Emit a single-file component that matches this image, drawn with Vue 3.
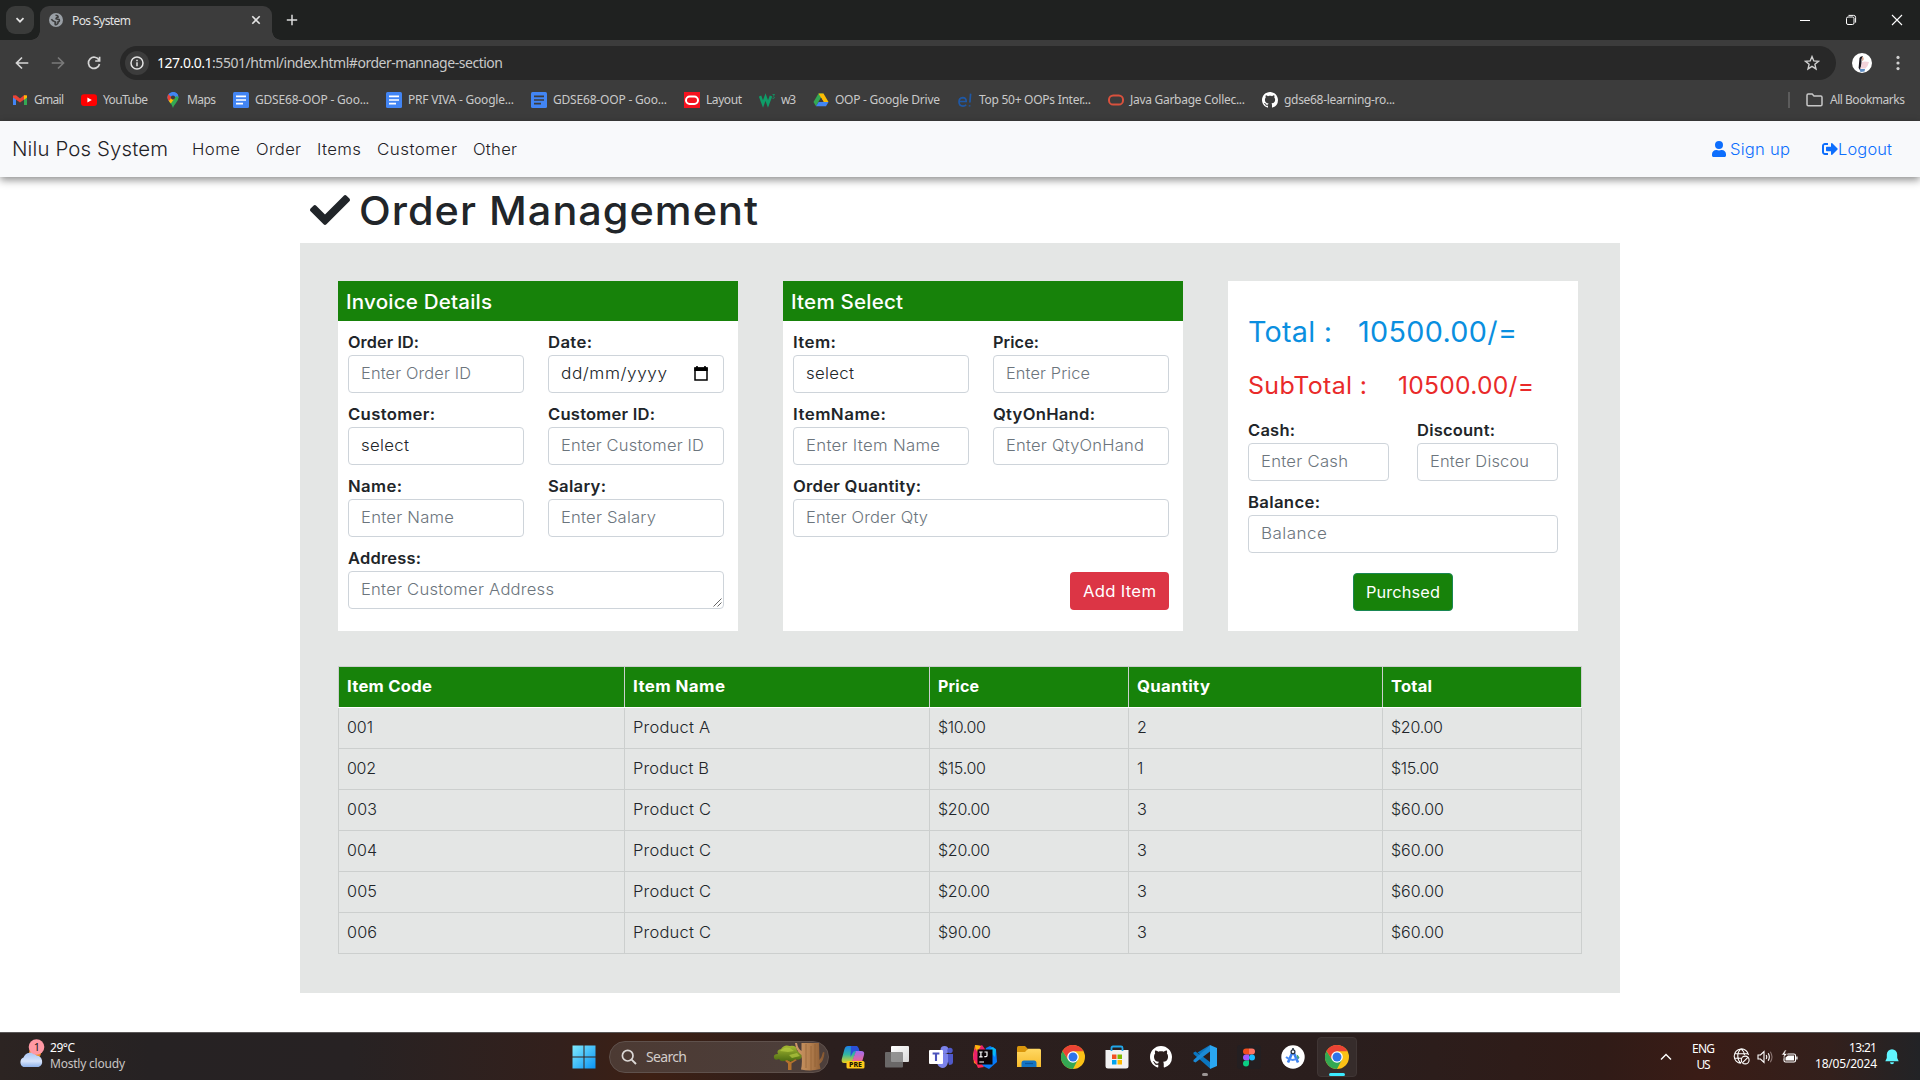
<script setup>
// v-fit: widens and tracks a line of text so that it takes exactly the given width
const vFit = {
  mounted(el, { value }) {
    const n = [...el.textContent].length
    const natural = el.getBoundingClientRect().width
    const scale = value > natural * 1.02 ? Math.pow(value / natural, 0.6) : 1
    const width = value / scale
    if (n > 1) el.style.letterSpacing = `${(width - natural) / (n - 1)}px`
    el.style.width = `${width}px`
    if (scale > 1) {
      el.style.transform = `scaleX(${scale})`
      el.style.marginRight = `${value - width}px`
    }
  },
}

const bookmarks = [
  { icon: 'gmail', text: 'Gmail', w: 30 },
  { icon: 'youtube', text: 'YouTube', w: 45 },
  { icon: 'maps', text: 'Maps', w: 29 },
  { icon: 'docs', text: 'GDSE68-OOP - Goo...', w: 114 },
  { icon: 'docs', text: 'PRF VIVA - Google...', w: 106 },
  { icon: 'docs2', text: 'GDSE68-OOP - Goo...', w: 114 },
  { icon: 'layout', text: 'Layout', w: 36 },
  { icon: 'w3', text: 'w3', w: 15 },
  { icon: 'drive', text: 'OOP - Google Drive', w: 105 },
  { icon: 'edu', text: 'Top 50+ OOPs Inter...', w: 112 },
  { icon: 'oracle', text: 'Java Garbage Collec...', w: 115 },
  { icon: 'github', text: 'gdse68-learning-ro...', w: 111 },
]

const links = [
  { text: 'Home', w: 48 },
  { text: 'Order', w: 45 },
  { text: 'Items', w: 44 },
  { text: 'Customer', w: 80 },
  { text: 'Other', w: 44 },
]

const invoice = [
  { label: 'Order ID:', lw: 71, text: 'Enter Order ID', w: 110 },
  { label: 'Date:', lw: 44, text: 'dd/mm/yyyy', w: 106, dark: true, date: true },
  { label: 'Customer:', lw: 87, text: 'select', w: 48, dark: true },
  { label: 'Customer ID:', lw: 107, text: 'Enter Customer ID', w: 143 },
  { label: 'Name:', lw: 54, text: 'Enter Name', w: 93 },
  { label: 'Salary:', lw: 58, text: 'Enter Salary', w: 95 },
  { label: 'Address:', lw: 73, text: 'Enter Customer Address', w: 193, wide: true, grip: true },
]

const items = [
  { label: 'Item:', lw: 43, text: 'select', w: 48, dark: true },
  { label: 'Price:', lw: 46, text: 'Enter Price', w: 84 },
  { label: 'ItemName:', lw: 93, text: 'Enter Item Name', w: 134 },
  { label: 'QtyOnHand:', lw: 102, text: 'Enter QtyOnHand', w: 138 },
  { label: 'Order Quantity:', lw: 128, text: 'Enter Order Qty', w: 122, wide: true },
]

const payment = [
  { label: 'Cash:', lw: 47, text: 'Enter Cash', w: 87 },
  { label: 'Discount:', lw: 78, text: 'Enter Discount', w: 114 },
  { label: 'Balance:', lw: 72, text: 'Balance', w: 66, wide: true },
]

const heads = [
  { text: 'Item Code', w: 85 },
  { text: 'Item Name', w: 92 },
  { text: 'Price', w: 41 },
  { text: 'Quantity', w: 73 },
  { text: 'Total', w: 41 },
]

const rows = [
  [['001', 26], ['Product A', 77], ['$10.00', 48], ['2', 9], ['$20.00', 52]],
  [['002', 29], ['Product B', 76], ['$15.00', 48], ['1', 6], ['$15.00', 48]],
  [['003', 30], ['Product C', 78], ['$20.00', 52], ['3', 10], ['$60.00', 53]],
  [['004', 30], ['Product C', 78], ['$20.00', 52], ['3', 10], ['$60.00', 53]],
  [['005', 30], ['Product C', 78], ['$20.00', 52], ['3', 10], ['$60.00', 53]],
  [['006', 30], ['Product C', 78], ['$90.00', 53], ['3', 10], ['$60.00', 53]],
]
</script>

<template>
  <div class="screen">
    <svg width="0" height="0" class="defs">
      <defs>
        <linearGradient id="winG" x1="0" y1="0" x2="1" y2="1"><stop offset="0" stop-color="#7feafd" /><stop offset="1" stop-color="#0a93f5" /></linearGradient>
        <linearGradient id="cloudG" x1="0" y1="0" x2="0" y2="1"><stop offset="0" stop-color="#a9c6f5" /><stop offset=".6" stop-color="#d6e4fb" /><stop offset="1" stop-color="#8fb2ea" /></linearGradient>
        <linearGradient id="trunkG" x1="0" y1="0" x2="1" y2="0"><stop offset="0" stop-color="#cf9a68" /><stop offset=".5" stop-color="#b5804f" /><stop offset="1" stop-color="#85562f" /></linearGradient>
        <linearGradient id="leafG" x1="0" y1="0" x2="0" y2="1"><stop offset="0" stop-color="#a5b932" /><stop offset="1" stop-color="#4c6b12" /></linearGradient>
        <linearGradient id="copA" x1="0" y1="0" x2="0" y2="1"><stop offset="0" stop-color="#1c7fe8" /><stop offset=".5" stop-color="#34b7a0" /><stop offset="1" stop-color="#e8d21c" /></linearGradient>
        <linearGradient id="copB" x1="0" y1="0" x2="0" y2="1"><stop offset="0" stop-color="#a06cf0" /><stop offset="1" stop-color="#f2668c" /></linearGradient>
        <linearGradient id="foldG" x1="0" y1="0" x2="0" y2="1"><stop offset="0" stop-color="#ffd863" /><stop offset="1" stop-color="#f7bb2b" /></linearGradient>
        <linearGradient id="tvG" x1="0" y1="0" x2="1" y2="1"><stop offset="0" stop-color="#fff" /><stop offset="1" stop-color="#d8d8d8" /></linearGradient>
        <symbol id="gh" viewBox="0 0 16 16"><path d="M8 0C3.58 0 0 3.58 0 8c0 3.54 2.29 6.53 5.47 7.59.4.07.55-.17.55-.38 0-.19-.01-.82-.01-1.49-2.01.37-2.53-.49-2.69-.94-.09-.23-.48-.94-.82-1.13-.28-.15-.68-.52-.01-.53.63-.01 1.08.58 1.23.82.72 1.21 1.87.87 2.33.66.07-.52.28-.87.51-1.07-1.78-.2-3.64-.89-3.64-3.95 0-.87.31-1.59.82-2.15-.08-.2-.36-1.02.08-2.12 0 0 .67-.21 2.2.82.64-.18 1.32-.27 2-.27s1.36.09 2 .27c1.53-1.04 2.2-.82 2.2-.82.44 1.1.16 1.92.08 2.12.51.56.82 1.27.82 2.15 0 3.07-1.87 3.75-3.65 3.95.29.25.54.73.54 1.48 0 1.07-.01 1.93-.01 2.2 0 .21.15.46.55.38A8.01 8.01 0 0 0 16 8c0-4.42-3.58-8-8-8z" fill="#fff" /></symbol>
        <symbol id="chrome" viewBox="0 0 48 48">
          <circle cx="24" cy="24" r="24" fill="#fbc116" />
          <path d="M14.400 29.500 3.200 12A24 24 0 0 0 24 48L33.600 29.500Z" fill="#34a853" />
          <path d="M3.200 12A24 24 0 0 1 44.800 12.500H24L14.400 29.500Z" fill="#ea4335" />
          <circle cx="24" cy="24" r="11.600" fill="#fff" /><circle cx="24" cy="24" r="9" fill="#2f74ea" />
        </symbol>
      </defs>
    </svg>

    <!-- tab strip -->
    <div class="tabs">
      <div class="tabsearch"><svg width="10" height="10" viewBox="0 0 10 10"><path d="M1.5 3.2 5 6.7 8.5 3.2" fill="none" stroke="#e3e3e3" stroke-width="1.7" /></svg></div>
      <div class="tab">
        <svg width="14" height="14" viewBox="0 0 14 14"><circle cx="7" cy="7" r="7" fill="#9aa0a6" /><path d="M6.5 2.2Q9.5 2.5 9 4.2 7 4.6 7 5.8 9 6.5 10.2 6.6 11 8.6 9 9 9.4 11 7 11.8 5.8 12 6.2 10 7.4 9 5.5 8.6 3.4 8 2.4 6.2" fill="none" stroke="#3c3c3c" stroke-width="1.6" /></svg>
        <span v-fit="59" class="tabtitle">Pos System</span>
        <svg width="10" height="10" viewBox="0 0 10 10"><path d="M1.3 1.3 8.7 8.7M8.7 1.3 1.3 8.7" stroke="#e3e3e3" stroke-width="1.6" /></svg>
      </div>
      <svg class="plus" width="12" height="12" viewBox="0 0 12 12"><path d="M6 .8V11.2M.8 6H11.2" stroke="#dcdcdc" stroke-width="1.5" /></svg>
      <div class="winbtns">
        <svg width="12" height="12" viewBox="0 0 12 12"><path d="M1 6.5H11" stroke="#fff" /></svg>
        <svg width="12" height="12" viewBox="0 0 12 12"><rect x="1.5" y="3" width="7.5" height="7.5" rx="1.5" fill="none" stroke="#fff" /><path d="M3.5 1.4H8.6A2 2 0 0 1 10.6 3.4V8.6" fill="none" stroke="#fff" /></svg>
        <svg width="12" height="12" viewBox="0 0 12 12"><path d="M1 1 11 11M11 1 1 11" stroke="#fff" stroke-width="1.1" /></svg>
      </div>
    </div>

    <!-- address bar -->
    <div class="toolbar">
      <div class="navbtns">
        <svg width="16" height="16" viewBox="0 0 16 16"><path d="M14.3 8H3M8 2.5 2.5 8 8 13.5" fill="none" stroke="#d6d6d6" stroke-width="1.7" /></svg>
        <svg width="16" height="16" viewBox="0 0 16 16"><path d="M1.7 8H13M8 2.5 13.5 8 8 13.5" fill="none" stroke="#797979" stroke-width="1.7" /></svg>
        <svg width="16" height="16" viewBox="0 0 16 16"><path d="M13 5.2A5.6 5.6 0 1 0 13.5 9M13.6 1.8V6H9.2" fill="none" stroke="#d6d6d6" stroke-width="1.7" /></svg>
      </div>
      <div class="omni">
        <div class="info"><svg width="14" height="14" viewBox="0 0 14 14"><circle cx="7" cy="7" r="6" fill="none" stroke="#e3e3e3" stroke-width="1.5" /><path d="M7 6.2V10.3M7 3.7V5.2" stroke="#e3e3e3" stroke-width="1.5" /></svg></div>
        <span v-fit="346" class="url"><b>127.0.0.1</b>:5501/html/index.html#order-mannage-section</span>
        <svg class="star" width="16" height="16" viewBox="0 0 16 16"><path d="M8 1.6 9.8 5.9 14.5 6.3 10.9 9.3 12 13.9 8 11.4 4 13.9 5.1 9.3 1.5 6.3 6.2 5.9Z" fill="none" stroke="#d0d0d0" stroke-width="1.4" /></svg>
      </div>
      <svg class="avatar" width="20" height="20" viewBox="0 0 20 20"><circle cx="10" cy="10" r="10" fill="#fff" /><path d="M7.500 5Q8.500 2.800 11 3.300L9.500 6V11L8 17 6.600 15Z" fill="#1b1720" /><path d="M10 3.800Q12.300 4 11.500 7L10 8.200Z" fill="#d9a58e" /><path d="M10 9 13 8.500 17 9 15.500 13 13.500 15.500H8.500Z" fill="#f3d3da" /><path d="M7.500 16H13L12.500 18.500 8.500 19Z" fill="#5f8ec4" /></svg>
      <svg class="dots" width="4" height="16" viewBox="0 0 4 16"><g fill="#d0d0d0"><circle cx="2" cy="2.4" r="1.6" /><circle cx="2" cy="8" r="1.6" /><circle cx="2" cy="13.6" r="1.6" /></g></svg>
    </div>

    <!-- bookmarks -->
    <div class="marks">
      <div v-for="(b, i) in bookmarks" :key="i" class="mark">
        <svg width="16" height="16" viewBox="0 0 16 16">
          <g v-if="b.icon === 'gmail'"><path d="M1 4V13H4V6Z" fill="#4285f4" /><path d="M12 6V13H15V4Z" fill="#34a853" /><path d="M1 3.5 4 3.2 8 6.4 12 3.2 15 3.5V5.6L8 10.6 1 5.6Z" fill="#ea4335" /><path d="M12 3.2 15 3.5V5.6L12 7.8Z" fill="#fbbc04" /></g>
          <g v-else-if="b.icon === 'youtube'"><rect y="2.3" width="16" height="11.6" rx="3" fill="#f00" /><path d="M6.4 5.6 10.8 8.1 6.4 10.6Z" fill="#fff" /></g>
          <g v-else-if="b.icon === 'maps'"><path d="M8 0A5.6 5.6 0 0 0 2.4 5.6Q2.4 8 5 10.5L13.6 5.6A5.6 5.6 0 0 0 8 0Z" fill="#4285f4" /><path d="M3.7 2.1 8 5.6 4.5 9.8Q2.4 7.7 2.4 5.6 2.4 3.6 3.7 2.1Z" fill="#ea4335" /><path d="M4 9.3 10 2.2 13.6 5.6Q13.6 8 11 11Q8.8 13.5 8 16 7.2 13 5.5 11.2Z" fill="#34a853" /><path d="M3.8 9 8 4 10 6 5.8 11.4Z" fill="#fbbc04" /><path d="M3.7 2.1 8 0Q12 0 13.2 3.5L10 5 5 4Z" fill="#4285f4" /><circle cx="8" cy="5.6" r="2.1" fill="#3c3c3c" /></g>
          <g v-else-if="b.icon === 'docs' || b.icon === 'docs2'"><rect width="16" height="16" rx="1.5" fill="#4285f4" /><path d="M3 4.3H13M3 8H13M3 11.7H10" :stroke="b.icon === 'docs' ? '#fff' : '#3c3c3c'" stroke-width="1.7" /></g>
          <g v-else-if="b.icon === 'layout'"><rect width="16" height="16" fill="#f5121f" /><rect x="2" y="4.5" width="12" height="7.4" rx="3.7" fill="none" stroke="#fff" stroke-width="2" /></g>
          <g v-else-if="b.icon === 'w3'"><path d="M1 4 4 12 6.5 5 9 12 12 4" fill="none" stroke="#0f9d68" stroke-width="2.6" /><path d="M13.5 2.5H15.6L14.4 4.2Q16.2 5 14.8 6.4L13.4 6.2" fill="none" stroke="#0f9d68" stroke-width=".8" /></g>
          <g v-else-if="b.icon === 'drive'"><path d="M5.5 1.5H10.5L5.5 10 3 14.2.5 10Z" fill="#34a853" /><path d="M5.5 1.5H10.5L15.5 10H10.6Z" fill="#fbbc04" /><path d="M5.6 10H15.5L13 14.2H3Z" fill="#4285f4" /><path d="M8 5.8 10.5 10H5.5Z" fill="#3c3c3c" /></g>
          <g v-else-if="b.icon === 'edu'"><path d="M2.6 9.5H9.2Q9.2 5.6 5.8 5.6 2 5.8 2 10 2.2 14 6 14.2 8 14.2 9.2 12.8M13.6 1.6 12.9 10.5M12.6 13.2V14.6" fill="none" stroke="#1f58a5" stroke-width="1.7" /></g>
          <g v-else-if="b.icon === 'oracle'"><rect x="1" y="3.4" width="14" height="9.2" rx="4.2" fill="none" stroke="#d8513d" stroke-width="2" /></g>
          <use v-else href="#gh" />
        </svg>
        <span v-fit="b.w">{{ b.text }}</span>
      </div>
      <div class="allmarks">
        <i class="sep"></i>
        <svg width="17" height="14" viewBox="0 0 17 14"><path d="M1 2.2Q1 1 2.2 1H6.2L8 3H14.8Q16 3 16 4.2V11.6Q16 12.8 14.8 12.8H2.2Q1 12.8 1 11.6Z" fill="none" stroke="#c7c7c7" stroke-width="1.5" /></svg>
        <span v-fit="75">All Bookmarks</span>
      </div>
    </div>

    <!-- site navbar -->
    <nav class="sitenav">
      <span v-fit="156" class="brand">Nilu Pos System</span>
      <div class="links"><span v-for="l in links" :key="l.text" v-fit="l.w">{{ l.text }}</span></div>
      <div class="auth">
        <svg width="14" height="16" viewBox="0 0 448 512"><path d="M224 256a128 128 0 1 0 0-256 128 128 0 1 0 0 256zm90 32h-17c-22 10-47 16-73 16s-51-6-73-16h-17C60 288 0 348 0 422v42c0 26 22 48 48 48h352c26 0 48-22 48-48v-42c0-74-60-134-134-134z" fill="#0d6efd" /></svg>
        <span v-fit="60" class="signup">Sign up</span>
        <svg class="exit" width="16" height="16" viewBox="0 0 512 512"><path d="M497 273 329 441c-15 15-41 4.500-41-17v-96H152c-13 0-24-11-24-24v-96c0-13 11-24 24-24h136V88c0-21 26-32 41-17l168 168c9 9 9 25 0 34zM192 436v-40c0-7-5-12-12-12H96c-18 0-32-14-32-32V160c0-18 14-32 32-32h84c7 0 12-5 12-12V76c0-7-5-12-12-12H96c-53 0-96 43-96 96v192c0 53 43 96 96 96h84c7 0 12-5 12-12z" fill="#0d6efd" /></svg>
        <span v-fit="54">Logout</span>
      </div>
    </nav>

    <main class="page">
      <h1 class="title">
        <svg width="40" height="40" viewBox="0 0 512 512"><path d="M173.900 439.400 7.500 273c-10-10-10-26.200 0-36.200l36.200-36.200c10-10 26.200-10 36.200 0L192 312.700 432.100 72.600c10-10 26.200-10 36.200 0l36.200 36.200c10 10 10 26.200 0 36.200L210.100 439.400c-10 10-26.200 10-36.200 0z" fill="#212529" /></svg>
        <span v-fit="399">Order Management</span>
      </h1>

      <section class="panel">
        <div class="cards">
          <div class="card">
            <h5 class="head"><span v-fit="146">Invoice Details</span></h5>
            <div class="grid">
              <div v-for="f in invoice" :key="f.label" class="field" :class="{ wide: f.wide }">
                <label><span v-fit="f.lw">{{ f.label }}</span></label>
                <div class="input" :class="{ dark: f.dark }">
                  <span v-fit="f.w">{{ f.text }}</span>
                  <svg v-if="f.date" class="cal" width="14" height="15" viewBox="0 0 14 15"><path d="M3 0V3M11 0V3" stroke="#000" stroke-width="1.6" /><path d="M1 2H13V14H1Z" fill="none" stroke="#000" stroke-width="1.5" /><path d="M.3 1.500H13.700V5H.3Z" /></svg>
                  <svg v-if="f.grip" class="grip" width="9" height="9" viewBox="0 0 9 9"><path d="M.5 8.500 8.500.5M4.500 8.500 8.500 4.500" stroke="#555" stroke-width=".9" /></svg>
                </div>
              </div>
            </div>
          </div>

          <div class="card">
            <h5 class="head"><span v-fit="112">Item Select</span></h5>
            <div class="grid">
              <div v-for="f in items" :key="f.label" class="field" :class="{ wide: f.wide }">
                <label><span v-fit="f.lw">{{ f.label }}</span></label>
                <div class="input" :class="{ dark: f.dark }"><span v-fit="f.w">{{ f.text }}</span></div>
              </div>
            </div>
            <div class="action"><button class="btn red"><span v-fit="73">Add Item</span></button></div>
          </div>

          <div class="card pay">
            <div class="sum total"><span v-fit="84">Total :</span><span v-fit="159">10500.00/=</span></div>
            <div class="sum sub"><span v-fit="119">SubTotal :</span><span v-fit="136">10500.00/=</span></div>
            <div class="grid paygrid">
              <div v-for="f in payment" :key="f.label" class="field" :class="{ wide: f.wide }">
                <label><span v-fit="f.lw">{{ f.label }}</span></label>
                <div class="input"><div class="clip"><span v-fit="f.w">{{ f.text }}</span></div></div>
              </div>
            </div>
            <button class="btn green"><span v-fit="74">Purchsed</span></button>
          </div>
        </div>

        <table class="table">
          <colgroup><col class="c1" /><col class="c2" /><col class="c3" /><col class="c4" /><col class="c5" /></colgroup>
          <thead><tr><th v-for="h in heads" :key="h.text"><span v-fit="h.w">{{ h.text }}</span></th></tr></thead>
          <tbody>
            <tr v-for="(r, i) in rows" :key="i"><td v-for="(c, j) in r" :key="j"><span v-fit="c[1]">{{ c[0] }}</span></td></tr>
          </tbody>
        </table>
      </section>
    </main>

    <!-- taskbar -->
    <footer class="taskbar">
      <div class="weather">
        <svg width="28" height="32" viewBox="0 0 28 32"><circle cx="17" cy="15" r="6" fill="#f08a1d" /><path d="M5.500 29A5.200 5.200 0 0 1 5.500 19.500 7.500 7.500 0 0 1 18.500 17.500 6 6 0 0 1 20.500 29Z" fill="url(#cloudG)" /><circle cx="18.500" cy="9" r="7.800" fill="#ff99a4" /><text x="19" y="13" text-anchor="middle" font-size="11" fill="#1c1c1c">1</text></svg>
        <div class="wtext"><span v-fit="25">29°C</span><span v-fit="75" class="dim">Mostly cloudy</span></div>
      </div>

      <div class="apps">
        <svg width="24" height="24" viewBox="0 0 24 24"><path d="M.5.5H11.500V11.500H.5ZM12.500.5H23.500V11.500H12.500ZM.5 12.500H11.500V23.500H.5ZM12.500 12.500H23.500V23.500H12.500Z" fill="url(#winG)" /></svg>
        <div class="search">
          <svg width="16" height="16" viewBox="0 0 16 16"><circle cx="6.700" cy="6.700" r="5.300" fill="none" stroke="#dcd8d6" stroke-width="1.700" /><path d="M10.600 10.600 15 15" stroke="#dcd8d6" stroke-width="1.900" /></svg>
          <span v-fit="41">Search</span>
          <svg class="tree" width="52" height="28" viewBox="0 0 52 28">
            <path d="M11 17 15 20.500V27H18.500V20.500L24 17 22 16 17.500 19 13 16Z" fill="#b4722e" />
            <path d="M1 15Q0 11 5 11 3 7 8 6 11 1 17 3 24 2 24 8 29 9 29 14 27 18 22 16 19 20 14 17 8 20 6 16 2 18 1 15Z" fill="url(#leafG)" />
            <path d="M7 8Q11 3 17 5L21 8 15 9ZM16 12 24 10 27 13 19 15Z" fill="#b5c941" opacity=".7" />
            <path d="M22 0H24Q25 6 28.500 8V0H46L46.500 17Q49 14 50 9L51.500 9.500Q51 18 46.500 21L47.500 26Q38 28.500 28 26.500 29.500 20 28.500 12 23 8 22 0Z" fill="url(#trunkG)" />
            <path d="M33 1V25M38 3V27M42 1V24" stroke="#8a5a31" stroke-width=".6" />
          </svg>
        </div>
        <div class="icons">
          <svg width="24" height="24" viewBox="0 0 24 24"><path d="M7 1H15Q17 1 16 4L12 15Q11 18 8 18H3Q0 18 .8 14L3.500 4Q4.300 1 7 1Z" fill="url(#copA)" /><path d="M15 6H20Q24 6 23 10L21 17H8Q11 17 12 14Z" fill="url(#copB)" /><path d="M10 1H15Q17.500 1 18.500 6H14Q12 6 11 9L9.500 12Z" fill="#2a50d8" /><rect x="5.500" y="16" width="18" height="7.500" rx="1.500" fill="#ffca1a" /><text x="14.500" y="22.300" text-anchor="middle" font-size="7" font-weight="800" fill="#1c1400">PRE</text></svg>
          <svg width="24" height="24" viewBox="0 0 24 24"><rect x="6" y="1" width="18" height="16" rx="1" fill="url(#tvG)" /><rect y="7" width="18" height="15.500" rx="1" fill="#7a7a7a" opacity=".8" /></svg>
          <svg width="24" height="24" viewBox="0 0 24 24"><circle cx="15.500" cy="5" r="4" fill="#7b83eb" /><circle cx="21" cy="5.500" r="2.700" fill="#5059c9" /><path d="M17 9H24V17Q24 20 20 20Z" fill="#5059c9" /><path d="M9 9H19V17Q18 23 13 23 9 22 8 18Z" fill="#7b83eb" /><rect y="5" width="14" height="14" rx="1" fill="#fff" /><path d="M3.600 8.500H10.400M7 8.500V16" stroke="#4b53bc" stroke-width="2.100" /></svg>
          <svg width="24" height="24" viewBox="0 0 24 24"><path d="M2 0 9 1 12 6 6 21 1 18 0 10Z" fill="#fc801d" /><path d="M9 0 14 7 5 20 0 14 1 5Z" fill="#e9216b" /><path d="M2 0 8 1 4 7Z" fill="#fdb60d" /><path d="M13 3 17 1 23 4 24 17 16 24 8 20Z" fill="#087cfa" /><path d="M15 5 20 2 23 5 22 12Z" fill="#07b9f5" /><path d="M1 14 8 18 11 22 5 23Z" fill="#fe2857" /><rect x="4.500" y="4.500" width="15" height="15" fill="#0b0508" /><path d="M6.200 7H9.600M7.900 7V11.800M6.200 11.800H9.600M11.500 7H14V10.500Q14 12 11.300 11.600M6.300 17H11" fill="none" stroke="#fff" stroke-width="1.200" /></svg>
          <svg width="24" height="24" viewBox="0 0 24 24"><path d="M0 2.500Q0 1 1.500 1H8L10.500 3.500V9H0Z" fill="#d9960c" /><path d="M0 7H8L11 3.800H22.500Q24 3.800 24 5.300V22H0Z" fill="url(#foldG)" /><path d="M4.500 22V18Q4.500 15.500 7 15.500H17Q19.500 15.500 19.500 18V22Z" fill="#1374c4" /><path d="M8 18.500H16" stroke="#0b559c" stroke-width="1.200" /></svg>
          <svg width="24" height="24"><use href="#chrome" /></svg>
          <svg width="24" height="24" viewBox="0 0 24 24"><path d="M.5 5H23.500V21Q23.500 23.500 21 23.500H3Q.5 23.500.5 21Z" fill="#f2f2f2" /><path d="M7 9.500H11.500V14H7Z" fill="#f25022" /><path d="M12.500 9.500H17V14H12.500Z" fill="#7fba00" /><path d="M7 15H11.500V19.500H7Z" fill="#00a4ef" /><path d="M12.500 15H17V19.500H12.500Z" fill="#ffb900" /><path d="M6.500 6V3Q6.500 1.500 8 1.500H16Q17.500 1.500 17.500 3V6" fill="none" stroke="#21a7ea" stroke-width="1.800" /></svg>
          <svg width="24" height="24" viewBox="-1 -1 24 24"><use href="#gh" width="22" height="22" /></svg>
          <div class="running"><svg width="24" height="24" viewBox="0 0 24 24"><path d="M17 0 7 10 2.500 6.500.5 7.500V9L17 23.500V17L4.500 7.500" fill="#0b76c0" /><path d="M17 0 .5 15V16.500L2.500 17.500 17 6.500Z" fill="#1b8ad6" /><path d="M17 0 24 3V21L17 24Z" fill="#2aa7f2" /></svg></div>
          <svg width="24" height="24" viewBox="0 0 24 24"><rect width="24" height="24" rx="3" fill="#241f21" /><path d="M12 3.500H9A3 3 0 0 0 9 9.500H12Z" fill="#f24e1e" /><path d="M12 3.500H15A3 3 0 0 1 15 9.500H12Z" fill="#ff7262" /><path d="M12 9.500H9A3 3 0 0 0 9 15.500H12Z" fill="#a259ff" /><circle cx="15" cy="12.500" r="3" fill="#1abcfe" /><path d="M12 15.500H9A3 3 0 1 0 12 18.500Z" fill="#0acf83" /></svg>
          <svg width="24" height="24" viewBox="0 0 24 24"><circle cx="12" cy="12" r="11.700" fill="#fff" /><path d="M12 6 7 17.500M12 6 17 17.500" stroke="#3c82f0" stroke-width="2.600" /><path d="M5 12Q12 18 18 12" fill="none" stroke="#4c8df5" stroke-width="2" /><path d="M15.500 9.500A3 3 0 0 1 17 14.500Z" fill="#3ba55c" /><circle cx="12" cy="6.800" r="1.900" fill="#fff" stroke="#26323f" stroke-width="1.300" /><path d="M12 3V5" stroke="#26323f" stroke-width="1.600" /></svg>
          <div class="active"><svg width="24" height="24"><use href="#chrome" /></svg></div>
        </div>
      </div>

      <div class="tray">
        <svg width="12" height="8" viewBox="0 0 12 8"><path d="M1 6.500 6 1.500 11 6.500" fill="none" stroke="#fff" stroke-width="1.400" /></svg>
        <div class="lang"><span v-fit="23">ENG</span><span v-fit="14">US</span></div>
        <svg class="globe" width="17" height="17" viewBox="0 0 17 17"><g fill="none" stroke="#fff" stroke-width="1.100"><path d="M15.500 7A7.200 7.200 0 1 0 8 15.300M1.500 5.700H14.800M1.500 10.300H8M8 .9Q4.500 4 4.800 8 4.600 12 8 15.300M8 .9Q11 3 11.400 7" /><circle cx="12.200" cy="12" r="3.900" /><path d="M9.600 14.600 14.900 9.400" /></g></svg>
        <svg class="speaker" width="17" height="14" viewBox="0 0 17 14"><g fill="none" stroke="#fff" stroke-width="1.100"><path d="M1 5H3.500L7 1.500V12.500L3.500 9H1Z" /><path d="M9.200 5Q10.500 7 9.200 9M11.200 3.300Q13.500 7 11.200 10.700" /><path d="M13.300 1.800Q16.700 7 13.300 12.200" stroke="#8a7572" /></g></svg>
        <svg class="battery" width="17" height="14" viewBox="0 0 17 14"><path d="M3 6V10.500Q3 12 4.500 12H13Q14.500 12 14.500 10.500V5.500Q14.500 4 13 4H6" fill="none" stroke="#fff" stroke-width="1.100" /><path d="M4.500 7.500 7 5.500H13V10.500H4.500Z" fill="#fff" /><path d="M15.900 6.500V9.500" stroke="#fff" stroke-width="1.300" /><path d="M4 0 .5 5H3L2 8.500 6.500 3.500H3.800L5.500 0Z" fill="#fff" stroke="#3a1c16" stroke-width=".6" /></svg>
        <div class="clock"><span v-fit="28">13:21</span><span v-fit="62">18/05/2024</span></div>
        <svg class="bell" width="14" height="16" viewBox="0 0 14 16"><path d="M7 .3A5.200 5.200 0 0 0 1.800 5.500V9L.3 12.300H13.700L12.200 9V5.500A5.200 5.200 0 0 0 7 .3ZM5 13.300H9A2 2 0 0 1 5 13.300Z" fill="#60f5ff" /></svg>
      </div>
    </footer>
  </div>
</template>

<style>
body { margin: 0; overflow: hidden; background: #fff; }
</style>

<style scoped>
* { box-sizing: border-box; }
.screen { width: 1920px; height: 1080px; display: flex; flex-direction: column; overflow: hidden; background: #fff; font-family: Inter, "Liberation Sans", sans-serif; color: #212529; }
.defs { position: absolute; }
span { display: inline-block; flex: none; white-space: pre; transform-origin: 0 50%; }
svg { flex: none; display: block; }

.tabs, .toolbar, .marks, .taskbar { font-family: "Noto Sans", "Open Sans", sans-serif; }
.tabs { height: 40px; flex: none; background: #1f2120; display: flex; align-items: center; padding-left: 6px; }
.tabsearch { width: 28px; height: 28px; border-radius: 9px; background: #3a3b3a; display: grid; place-items: center; }
.tab { position: relative; width: 232px; height: 34px; align-self: flex-end; margin-left: 6px; border-radius: 9px 9px 0 0; background: #3c3c3c; display: flex; align-items: center; padding: 0 11px 6px 9px; }
.tab::before, .tab::after { content: ""; position: absolute; bottom: 0; width: 9px; height: 9px; }
.tab::before { left: -9px; background: radial-gradient(circle at 0 0, transparent 8.500px, #3c3c3c 9px); }
.tab::after { right: -9px; background: radial-gradient(circle at 100% 0, transparent 8.500px, #3c3c3c 9px); }
.tabtitle { margin: 1px 0 0 9px; font-size: 12px; color: #e3e3e3; }
.tab svg:last-child { margin-left: auto; }
.plus { margin-left: 14px; }
.winbtns { margin-left: auto; display: flex; gap: 34px; padding-right: 17px; }

.toolbar { height: 46px; flex: none; background: #3c3c3c; display: flex; align-items: center; padding: 0 20px 0 14px; }
.navbtns { display: flex; gap: 20px; width: 106px; }
.omni { width: 1716px; height: 34px; border-radius: 17px; background: #282828; display: flex; align-items: center; padding: 0 16px 0 5px; }
.info { width: 24px; height: 24px; border-radius: 50%; background: #3c3c3c; display: grid; place-items: center; margin-right: 8px; }
.url { font-size: 14px; color: #c9c9c9; padding-bottom: 1px; }
.url b { font-weight: 400; color: #fff; }
.star { margin-left: auto; }
.avatar { margin-left: 16px; }
.dots { margin-left: auto; }

.marks { height: 35px; flex: none; background: #3c3c3c; display: flex; align-items: center; padding: 0 15px 7px 12px; gap: 17px; font-size: 12px; color: #c9c9c9; }
.mark { display: flex; align-items: center; gap: 6px; }
.marks span { padding-bottom: 1px; }
.allmarks { margin-left: auto; display: flex; align-items: center; }
.sep { width: 2px; height: 16px; background: #5c5c5c; margin-right: 16px; }
.allmarks span { margin-left: 7px; }

.sitenav { position: relative; z-index: 1; height: 56px; flex: none; background: #f8f9fb; box-shadow: 0 3px 8px rgba(0, 0, 0, .45); display: flex; align-items: center; padding: 0 28px 1px 12px; color: #1f2226; font-size: 16px; font-weight: 350; }
.brand { font-size: 20px; }
.links { display: flex; gap: 16px; margin-left: 24px; }
.auth { margin-left: auto; display: flex; align-items: center; color: #0d6efd; }
.signup { margin-left: 4px; }
.exit { margin-left: 32px; }

.page { flex: 1; min-height: 0; padding: 0 300px; }
.title { height: 66px; margin: 0; padding: 2px 0 0 10px; display: flex; align-items: center; font-size: 39px; font-weight: 480; line-height: 48px; }
.title span { margin-left: 9px; }
.title svg { margin-top: -3px; }
.panel { height: 750px; background: #e4e6e5; padding: 38px 38px 0; }
.cards { display: flex; gap: 45px; height: 350px; }
.card { width: 400px; background: #fff; }
.pay { width: 350px; display: flex; flex-direction: column; align-items: center; padding-top: 29px; }
.head { margin: 0; height: 40px; padding: 2px 0 0 8px; background: #17820a; color: #fff; font-size: 20px; font-weight: 500; display: flex; align-items: center; }
.grid { display: grid; grid-template-columns: 176px 176px; column-gap: 24px; row-gap: 10px; padding: 10px 10px 0; }
.paygrid { grid-template-columns: 141px 141px; column-gap: 28px; padding: 0; margin-top: 15px; }
.wide { grid-column: 1 / 3; }
.field label { display: flex; align-items: center; height: 24px; padding-bottom: 2px; font-size: 16px; font-weight: 600; }
.input { position: relative; height: 38px; border: 1px solid #ced4da; border-radius: 4px; background: #fff; display: flex; align-items: center; padding: 0 12px 2px; font-size: 16px; font-weight: 350; color: #6c757d; }
.input.dark { color: #212529; }
.clip { width: 100px; overflow: hidden; }
.cal { margin: 1px 3px 0 auto; }
.grip { position: absolute; right: 1px; bottom: 1px; }
.btn { height: 38px; border: 0; border-radius: 4px; color: #fff; font: 400 16px Inter, sans-serif; padding: 0 0 1px; text-align: center; }
.action { display: flex; justify-content: flex-end; padding: 35px 14px 0; }
.red { width: 99px; background: #dc3545; }
.green { width: 100px; background: #17820a; border: 1px solid #198754; margin-top: 20px; }
.sum { width: 310px; display: flex; align-items: center; white-space: pre; }
.total { height: 44px; font-size: 28px; color: #0a8fe0; gap: 26px; }
.sub { height: 38px; margin-top: 12px; font-size: 24px; color: #e92a2a; gap: 31px; }

.table { margin-top: 35px; width: 1243px; table-layout: fixed; border-collapse: collapse; font-size: 16px; }
.c1 { width: 286px; } .c2 { width: 305px; } .c3 { width: 199px; } .c4 { width: 254px; } .c5 { width: 199px; }
.table th, .table td { height: 41px; padding: 0 8px 4px; text-align: left; border: 1px solid #cccfce; line-height: 24px; font-weight: 350; vertical-align: middle; }
.table span { vertical-align: middle; }
.table th { background: #17820a; color: #fff; font-weight: 700; border-bottom-color: #fff; }

.taskbar { height: 48px; flex: none; display: flex; align-items: center; border-top: 1px solid #5a5757; background: linear-gradient(90deg, #2c2422, #262223 150px, #272223 350px, #33201c 560px, #3d2014 650px, #2b1f1e 830px, #2a1e1d 1350px, #301b17 1600px, #3a1c16 1700px, #33201c 1830px, #222326 1920px); color: #fff; font-size: 12px; }
.weather { display: flex; align-items: center; width: 572px; padding-left: 18px; }
.wtext { display: flex; flex-direction: column; align-items: flex-start; margin: -1px 0 0 4px; line-height: 16px; }
.weather svg { margin-top: -5px; }
.dim { color: #c9c5c4; }
.apps { display: flex; align-items: center; }
.search { width: 220px; height: 32px; margin: 0 12px 0 13px; border-radius: 16px; border: 1px solid #5f514c; background: linear-gradient(90deg, #4c3a33, #4d3f3b); display: flex; align-items: center; padding: 0 3px 0 11px; font-size: 14px; color: #d3cdca; }
.search span { margin: -1px 0 0 9px; }
.tree { margin-left: auto; }
.icons { display: flex; align-items: center; gap: 20px; }
.running { position: relative; }
.running::after { content: ""; position: absolute; left: 9px; bottom: -7px; width: 6px; height: 3px; border-radius: 2px; background: #9c9695; }
.active { position: relative; width: 40px; height: 40px; margin-left: -8px; border-radius: 4px; background: #362c2b; border: 1px solid #403635; display: grid; place-items: center; }
.active::after { content: ""; position: absolute; left: 11px; bottom: 0; width: 16px; height: 3px; border-radius: 2px; background: #3ceaff; }
.tray { margin-left: auto; display: flex; align-items: center; padding-right: 21px; }
.lang, .clock { display: flex; flex-direction: column; line-height: 16px; }
.lang { align-items: center; margin: 0 18px 0 20px; }
.speaker { margin: 0 7px; }
.clock { align-items: flex-end; margin: -1px 8px 0 17px; }
</style>
